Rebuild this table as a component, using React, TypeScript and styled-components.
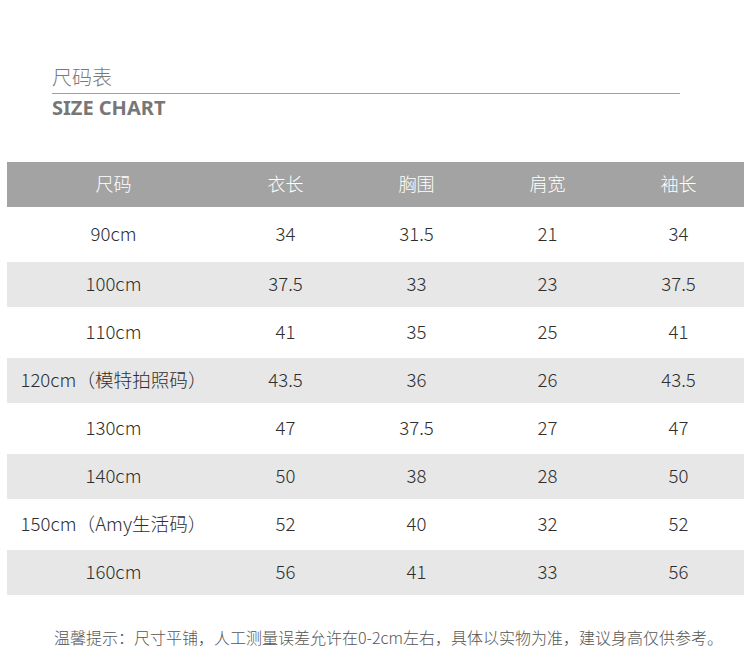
import React from 'react';
import styled, { createGlobalStyle } from 'styled-components';

const GlobalStyle = createGlobalStyle`
  html, body {
    margin: 0;
    padding: 0;
    background: #ffffff;
  }
  body {
    font-family: "Noto Sans CJK SC", "Noto Sans", sans-serif;
  }
`;

const Page = styled.div`
  width: 750px;
  height: 650px;
  box-sizing: border-box;
  padding-top: 64px;
  overflow: hidden;
`;

const TitleBlock = styled.div`
  margin: 0 70px 0 52px;
`;

const TitleCn = styled.div`
  font-size: 20px;
  line-height: 26px;
  color: #7a7a7a;
  font-weight: 300;
  padding-bottom: 3px;
  border-bottom: 1px solid #a0a0a0;
`;

const TitleEn = styled.div`
  font-family: "Noto Sans", sans-serif;
  font-size: 20px;
  line-height: 28px;
  font-weight: 700;
  color: #777777;
`;

const Table = styled.div`
  margin: 40px 7px 0 7px;
  display: grid;
  grid-template-columns: 213px repeat(4, 131px);
`;

const Row = styled.div<{ $tone: 'head' | 'white' | 'gray'; $h: number }>`
  display: contents;
  & > div {
    height: ${p => p.$h}px;
    background: ${p => (p.$tone === 'head' ? '#a3a3a3' : p.$tone === 'gray' ? '#e7e7e7' : '#ffffff')};
    color: ${p => (p.$tone === 'head' ? '#ffffff' : '#2e2e2e')};
    font-size: ${p => (p.$tone === 'head' ? 18 : 18.6)}px;
  }
`;

const Cell = styled.div`
  display: flex;
  align-items: center;
  justify-content: center;
  box-sizing: border-box;
  padding-bottom: 4px;
  font-weight: 300;
  white-space: nowrap;
`;

const Note = styled.div`
  margin-top: 31px;
  padding-left: 54px;
  font-size: 16px;
  line-height: 22px;
  font-weight: 300;
  color: #555555;
  white-space: nowrap;
`;

const rows: string[][] = [
  ['90cm', '34', '31.5', '21', '34'],
  ['100cm', '37.5', '33', '23', '37.5'],
  ['110cm', '41', '35', '25', '41'],
  ['120cm（模特拍照码）', '43.5', '36', '26', '43.5'],
  ['130cm', '47', '37.5', '27', '47'],
  ['140cm', '50', '38', '28', '50'],
  ['150cm（Amy生活码）', '52', '40', '32', '52'],
  ['160cm', '56', '41', '33', '56'],
];

export default function App() {
  return (
    <Page>
      <GlobalStyle />
      <TitleBlock>
        <TitleCn>尺码表</TitleCn>
        <TitleEn>SIZE CHART</TitleEn>
      </TitleBlock>
      <Table>
        <Row $tone="head" $h={45}>
          {['尺码', '衣长', '胸围', '肩宽', '袖长'].map(h => (
            <Cell key={h}>{h}</Cell>
          ))}
        </Row>
        {rows.map((r, i) => (
          <Row key={r[0]} $tone={i % 2 === 1 ? 'gray' : 'white'} $h={i % 2 === 1 ? 45 : i === 0 ? 55 : 51}>
            {r.map((v, j) => (
              <Cell key={j}>{v}</Cell>
            ))}
          </Row>
        ))}
      </Table>
      <Note>温馨提示：尺寸平铺，人工测量误差允许在0-2cm左右，具体以实物为准，建议身高仅供参考。</Note>
    </Page>
  );
}
